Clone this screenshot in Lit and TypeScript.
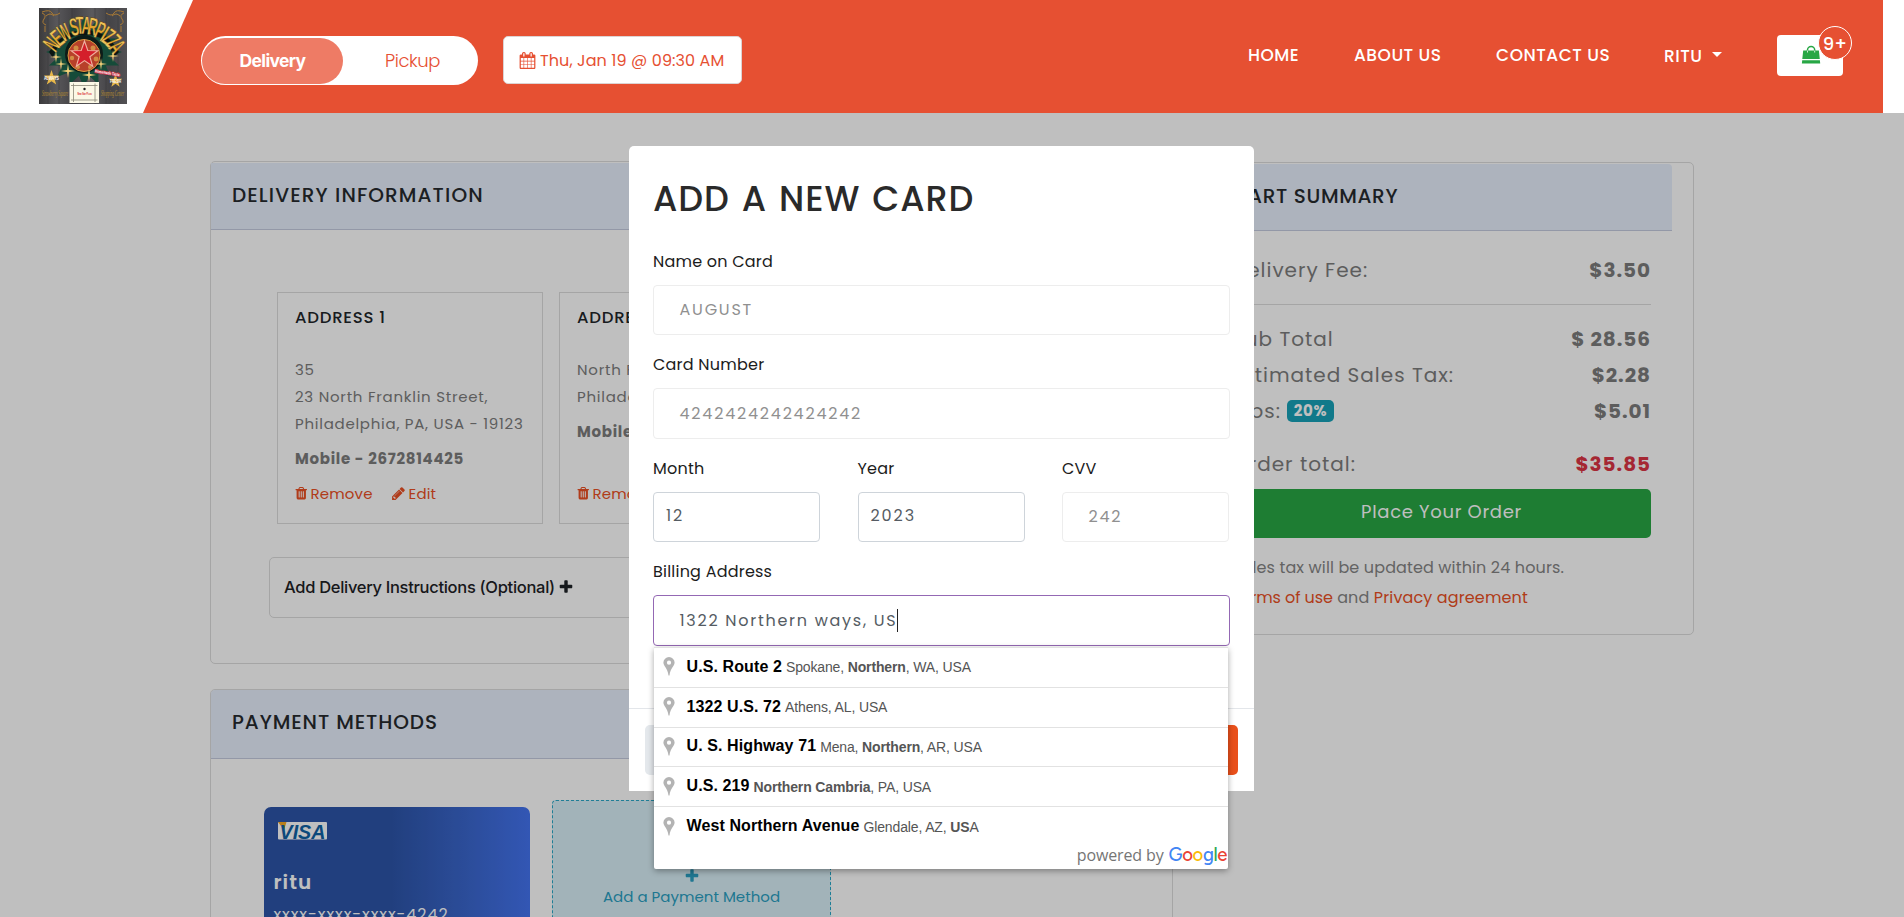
import { LitElement, html, css, svg } from "lit";
import { customElement } from "lit/decorators.js";

const ICONS: Record<string, string> = {
  calendar:
    "M192 1664h288v-288h-288v288zm352 0h320v-288h-320v288zm-352-352h288v-320h-288v320zm352 0h320v-320h-320v320zm-352-384h288v-288h-288v288zm736 736h320v-288h-320v288zm-384-736h320v-288h-320v288zm768 736h288v-288h-288v288zm-384-352h320v-320h-320v320zm-352-864v-288q0-13-9.5-22.5t-22.5-9.5h-64q-13 0-22.5 9.5t-9.5 22.5v288q0 13 9.5 22.5t22.5 9.5h64q13 0 22.5-9.5t9.5-22.5zm736 864h288v-320h-288v320zm-384-384h320v-288h-320v288zm384 0h288v-288h-288v288zm32-480v-288q0-13-9.5-22.5t-22.5-9.5h-64q-13 0-22.5 9.5t-9.5 22.5v288q0 13 9.5 22.5t22.5 9.5h64q13 0 22.5-9.5t9.5-22.5zm384-64v1280q0 52-38 90t-90 38h-1408q-52 0-90-38t-38-90v-1280q0-52 38-90t90-38h128v-96q0-66 47-113t113-47h64q66 0 113 47t47 113v96h384v-96q0-66 47-113t113-47h64q66 0 113 47t47 113v96h128q52 0 90 38t38 90z",
  trash:
    "M704 1376v-704q0-14-9-23t-23-9h-64q-14 0-23 9t-9 23v704q0 14 9 23t23 9h64q14 0 23-9t9-23zm256 0v-704q0-14-9-23t-23-9h-64q-14 0-23 9t-9 23v704q0 14 9 23t23 9h64q14 0 23-9t9-23zm256 0v-704q0-14-9-23t-23-9h-64q-14 0-23 9t-9 23v704q0 14 9 23t23 9h64q14 0 23-9t9-23zm-544-992h448l-48-117q-7-9-17-11h-317q-10 2-17 11zm928 32v64q0 14-9 23t-23 9h-96v948q0 83-47 143.5t-113 60.5h-832q-66 0-113-58.5t-47-141.5v-952h-96q-14 0-23-9t-9-23v-64q0-14 9-23t23-9h309l70-167q15-37 54-63t79-26h320q40 0 79 26t54 63l70 167h309q14 0 23 9t9 23z",
  pencil:
    "M491 1536l91-91-235-235-91 91v107h128v128h107zm523-928q0-22-22-22-10 0-17 7l-542 542q-7 7-7 17 0 22 22 22 10 0 17-7l542-542q7-7 7-17zm-54-192l416 416-832 832h-416v-416l832-832zm683 96q0 53-37 90l-166 166-416-416 166-165q36-38 90-38 53 0 91 38l235 234q37 39 37 91z",
  plus:
    "M1600 736v192q0 40-28 68t-68 28h-416v416q0 40-28 68t-68 28h-192q-40 0-68-28t-28-68v-416h-416q-40 0-68-28t-28-68v-192q0-40 28-68t68-28h416v-416q0-40 28-68t68-28h192q40 0 68 28t28 68v416h416q40 0 68 28t28 68z",
};

const icon = (name: string) => html`<svg class="ico ${name}" viewBox="0 0 1792 1792"><path d=${ICONS[name]} fill="currentColor"></path></svg>`;

const shared = css`
  :host { display: block; box-sizing: border-box; }
  *, *::before, *::after { box-sizing: border-box; }
  .ico { display: block; flex: none; }
`;

const STAR = "0,-1 .235,-.324 .951,-.309 .38,.124 .588,.809 0,.4 -.588,.809 -.38,.124 -.951,-.309 -.235,-.324";
const star = (x: number, y: number, r: number, fill: string, line = "none") =>
  svg`<polygon points=${STAR} transform="translate(${x} ${y}) scale(${r})" fill=${fill} stroke=${line} stroke-width=".08"></polygon>`;
const spark = (x: number, y: number, r: number) =>
  svg`<path transform="translate(${x} ${y}) scale(${r})" d="M0-1 .13-.13 1 0 .13.13 0 1-.13.13-1 0-.13-.13Z" fill="#f6d37a"></path>`;

/* Letters of the arched name, each with its centre and a horizontal squeeze. */
const ARCH: [string, number, number, number][] = [
  ["N", 12, 36, 0.52], ["E", 18, 29.5, 0.52], ["W", 25, 24, 0.44],
  ["S", 35, 18.5, 0.52], ["T", 41, 17, 0.52], ["A", 47.5, 17, 0.52], ["R", 54, 18, 0.52],
  ["P", 61.5, 22, 0.52], ["I", 66, 25.5, 0.6], ["Z", 70, 28.5, 0.52], ["Z", 75, 33, 0.52], ["A", 78.5, 38.5, 0.52],
];

@customElement("pizza-logo")
class PizzaLogo extends LitElement {
  static styles = [shared, css`
    svg { display: block; width: 88px; height: 96px; }
    .arc { font: 700 25px "Liberation Sans", sans-serif; text-anchor: middle; }
    .script { font: italic 8px "Liberation Serif", serif; fill: #b98d2f; }
    .tag { font: 700 4.5px "Liberation Sans", sans-serif; fill: #fff; }
    .promo { font: 700 4px "Liberation Sans", sans-serif; fill: #fff; }
    .map { font: 700 3.4px "Liberation Sans", sans-serif; fill: #d8232a; }
  `];
  render() {
    const ray = Array.from({ length: 32 }, (_, i) => {
      const a = (i * Math.PI) / 16, r = i % 2 ? 26 : 38;
      return `${(45 + r * Math.sin(a)).toFixed(1)},${(44 - r * Math.cos(a) * 0.93).toFixed(1)}`;
    }).join(" ");
    return html`<svg viewBox="0 0 88 96">
      <defs>
        <linearGradient id="gold" x1="0" y1="0" x2="0" y2="1">
          <stop offset="0" stop-color="#f9dc7c"></stop><stop offset=".55" stop-color="#e0a22a"></stop><stop offset="1" stop-color="#fbe58f"></stop>
        </linearGradient>
        <linearGradient id="wood" x1="0" x2="1">
          <stop offset="0" stop-color="#3b3a3c"></stop><stop offset=".2" stop-color="#58575a"></stop><stop offset=".4" stop-color="#434245"></stop>
          <stop offset=".6" stop-color="#5b5a5d"></stop><stop offset=".8" stop-color="#454447"></stop><stop offset="1" stop-color="#525154"></stop>
        </linearGradient>
      </defs>
      <rect width="88" height="96" fill="url(#wood)"></rect>
      <g stroke="#333235" stroke-width=".6" opacity=".7"><path d="M9 0v96M20 0v96M33 0v96M56 0v96M67 0v96M79 0v96"></path></g>
      <g fill="none" stroke="#a97a35" stroke-width="1">
        <path d="M3 4q8-3 10 1t8 0M3 5q5 2 2 6t2 6M7 8q4-4 8 0M85 4q-8-3-10 1t-8 0M85 5q-5 2-2 6t-2 6M81 8q-4-4-8 0M6 18v6M82 18v6"></path>
      </g>
      <polygon points=${ray} fill="#154b39"></polygon>
      <path d="M14 50Q20 27 46 27T74 50L80 44Q68 22 46 22T10 44Z" fill="#0a1512"></path>
      <circle cx="45" cy="46" r="19" fill="#0d1c18"></circle>
      <circle cx="45" cy="47.500" r="16" fill="#b8402a" stroke="#d79a40" stroke-width="1"></circle>
      <g fill="#d9a04c" opacity=".8">
        <circle cx="37" cy="40" r="2.500"></circle><circle cx="54" cy="40" r="2.500"></circle><circle cx="33" cy="50" r="2.200"></circle>
        <circle cx="57" cy="51" r="2.400"></circle><circle cx="39" cy="59" r="2"></circle><circle cx="51" cy="59" r="2"></circle>
      </g>
      ${star(45.5, 47, 14, "#d41f2b", "#f0b0a0")}
      ${ARCH.map(([c, x, y, k]) => svg`<text class="arc" fill="url(#gold)" stroke="#3b2708" stroke-width=".4" y="9" transform="translate(${x} ${y}) rotate(${(Math.atan2(x - 45, 62 - y) * 180) / Math.PI}) scale(${k} 1)">${c}</text>`)}
      ${spark(17, 49, 6)}${spark(22, 56, 6)}${spark(29, 63, 7)}${spark(50, 67, 7)}${spark(62, 56, 6)}${spark(74, 48, 6)}
      ${star(12.5, 70, 8, "#e8b84a")}${star(76.500, 73, 7, "#e8b84a")}
      <text class="tag" x="5" y="72" textLength="15" lengthAdjust="spacingAndGlyphs">ALWAYS</text>
      <text class="tag" x="71" y="75" textLength="11" lengthAdjust="spacingAndGlyphs">FRESH</text>
      <g transform="rotate(9 70 64)"><text class="promo" x="56" y="66.500" textLength="25" lengthAdjust="spacingAndGlyphs" stroke="#c93346" stroke-width="1.600" paint-order="stroke">Homemade Taste</text></g>
      <text class="script" x="3" y="88" textLength="26" lengthAdjust="spacingAndGlyphs">Strawberry Square</text>
      <text class="script" x="62" y="88" textLength="23" lengthAdjust="spacingAndGlyphs">Shopping Center</text>
      <rect x="30.500" y="74" width="29.500" height="21" fill="#fbf8e6"></rect>
      <path d="M32 77.500h26.500M32 92h26.500M34.500 75.500v18.500M56 75.500v18.500" stroke="#8a8676" stroke-width=".8" fill="none"></path>
      <circle cx="45.500" cy="81" r="1.200" fill="#222"></circle>
      <text class="map" x="38.500" y="87" textLength="14" lengthAdjust="spacingAndGlyphs">New Star Pizza</text>
    </svg>`;
  }
}

@customElement("top-bar")
class TopBar extends LitElement {
  static styles = [shared, css`
    :host { height: 113px; background: #fff; display: flex; }
    .brand { width: 143px; flex: none; padding: 8px 0 0 39px; }
    .bar { margin-right: 21px; flex: 1; height: 113px; display: flex; align-items: flex-start; background: #e65032; padding: 0 40px 0 58px;
      clip-path: polygon(50px 0, 100% 0, 100% 100%, 0 100%); }
    .toggle { margin-top: 36px; width: 277px; height: 49px; border-radius: 25px; background: #fff; display: flex; padding: 2px 1px 1px; line-height: 46px; font-size: 18px; }
    .on { width: 141px; border-radius: 24px; background: #ee7b65; color: #fff; font-family: "Inter", sans-serif; font-weight: 700; text-align: center; font-size: 17.5px; letter-spacing: -.65px; }
    .off { flex: 1; color: #e65032; text-align: center; font-weight: 300; letter-spacing: -.45px; padding-left: 5px; }
    .when { margin: 36px 0 0 25px; width: 239px; height: 48px; border-radius: 5px; border: 1px solid #dcd3d3; background: #fff; color: #e65032;
      font-size: 16px; letter-spacing: .1px; display: flex; align-items: center; padding-left: 15px; gap: 4px; }
    .calendar { width: 17px; height: 17px; }
    .links { margin: 35px 0 0 auto; display: grid; grid-template-columns: 106px 142px 168px 113px 66px; line-height: 40px; color: #fff; font-weight: 500; font-size: 17px; letter-spacing: .5px; }
    .user { display: flex; align-items: center; gap: 9.500px; }
    .caret { border: 5.5px solid transparent; border-top-color: #fff; border-bottom: 0; margin-top: -3px; }
    .cart { width: 66px; height: 41px; background: #fff; border-radius: 4px; position: relative; padding: 9px 0 0 23.500px; }
    .bag { display: block; width: 20px; height: 20px; }
    .count { position: absolute; left: 41px; top: -9px; width: 34px; height: 34px; border-radius: 50%; background: #e65032; border: 1px solid #fff; line-height: 33px; text-align: center; font-size: 18px; letter-spacing: 0; }
  `];
  render() {
    return html`
      <div class="brand"><pizza-logo></pizza-logo></div>
      <div class="bar">
        <div class="toggle"><div class="on">Delivery</div><div class="off">Pickup</div></div>
        <div class="when">${icon("calendar")}<span>Thu, Jan 19 @ 09:30 AM</span></div>
        <nav class="links">
          <span>HOME</span><span>ABOUT US</span><span>CONTACT US</span>
          <span class="user">RITU <i class="caret"></i></span>
          <div class="cart">
            <svg class="bag" viewBox="0 0 20 20"><path d="M6.500 9V6a3.600 3.600 0 0 1 7.200 0v3" fill="none" stroke="#28a745" stroke-width="1.500"></path><path d="M2.200 6.500h15.700L18.800 15H1.300ZM1.200 16.200h17.700L19.200 19.500H.9Z" fill="#28a745"></path><path d="M6.500 6.500v2M13.700 6.500v2" stroke="#fff" stroke-width=".8"></path></svg>
            <span class="count">9+</span>
          </div>
        </nav>
      </div>`;
  }
}

@customElement("checkout-page")
class CheckoutPage extends LitElement {
  static styles = [shared, css`
    :host { height: 804px; overflow: hidden; background: #fff; display: grid; grid-template-columns: 963px 483px; gap: 38px; padding: 48px 0 0 210px; align-items: start; color: #7c7c7c; }
    .panel { border: 1px solid #dcdcdc; border-radius: 5px; }
    .head { background: #e7effc; border-bottom: 1px solid #c5cbdf; color: #262a2e; font-weight: 500; font-size: 20px; padding-left: 21px; }
    .info { height: 503px; }
    .info .head { margin-top: 1px; height: 67px; line-height: 64px; letter-spacing: 1.1px; }
    .pay { margin-top: 25px; height: 400px; }
    .pay .head { height: 69px; line-height: 64px; letter-spacing: .9px; border-radius: 4px 4px 0 0; }
    .cards { display: flex; gap: 16px; padding: 62px 0 0 66px; }
    .addr { width: 266px; height: 232px; border: 1px solid #dcdcdc; padding: 12px 0 16px 17px; display: flex; flex-direction: column; font-size: 15px; line-height: 27px; white-space: nowrap; letter-spacing: .74px; }
    .addr h3 { margin: 0 0 25px; font-weight: 500; font-size: 16.5px; line-height: 26px; color: #22262a; letter-spacing: .75px; }
    .mobile { font-weight: 700; margin-top: 8px; letter-spacing: .72px; }
    .acts { margin-top: auto; display: flex; align-items: center; color: #eb5024; letter-spacing: .15px; }
    .acts .trash { width: 14.5px; height: 14.5px; margin: 0 2px 0 -1px; }
    .acts .pencil { width: 15px; height: 15px; margin: 0 3px 0 18px; }
    .extra { margin: 33px 0 0 58px; width: 780px; height: 61px; border: 1px solid #dcdcdc; border-radius: 5px; padding: 0 0 1px 14px; display: flex; align-items: center; gap: 3px; color: #1e2226; font-family: "Inter", sans-serif; font-weight: 500; font-size: 16.5px; letter-spacing: -.3px; }
    .extra .plus { width: 16px; height: 16px; }
    .methods { display: flex; gap: 22px; padding: 41px 0 0 53px; }
    .visa { margin-top: 7px; width: 266px; height: 170px; border-radius: 7px; background: linear-gradient(90deg, #2d55a9 0, #2d55a9 48%, #3a66cc 75%, #4474f1 100%); color: #fff; padding: 15px 9.5px; letter-spacing: .96px; font-size: 16px; line-height: 24px; }
    .mark { display: block; width: 50px; height: 18px; margin: 0 0 30px 4px; }
    .mark text { font: italic 700 21px "Liberation Sans", sans-serif; fill: #0f62a5; letter-spacing: 0; }
    .owner { font-weight: 600; font-size: 20px; letter-spacing: 1.03px; margin-bottom: 9px; }
    .add { width: 279px; height: 190px; border: 1px dashed #2aa9c8; border-radius: 4px; background: #d9eff7; color: #2a9fc2; display: flex; flex-direction: column; align-items: center; padding-top: 67px; font-size: 15px; letter-spacing: .03px; line-height: 24px; }
    .add .plus { width: 16px; height: 16px; margin-bottom: 1px; }
    .cart { margin-top: 1px; height: 473px; font-size: 20px; letter-spacing: 1px; padding-right: 42px; }
    .cart .head { margin: 1px -21px 0 0; height: 67px; line-height: 64px; letter-spacing: .65px; border-radius: 0 4px 0 0; padding-left: 20px; }
    .body { padding: 21px 0 0 20px; }
    .row { display: flex; justify-content: space-between; align-items: center; height: 36px; }
    .row b { letter-spacing: .95px; }
    .rule { border-top: 1px solid #dcdcdc; margin: 16px 0 16px; }
    .pct { background: #17a2b8; color: #fff; border-radius: 5px; font-size: 15px; font-weight: 700; letter-spacing: .6px; width: 47px; height: 22px; line-height: 22px; margin-left: 6px; text-align: center; }
    .tips { display: flex; align-items: center; }
    .total { margin-top: 16.500px; }
    .total b { color: #dc3545; }
    .order { margin-top: 7.500px; height: 49px; border-radius: 5px; background: #28a745; color: #fff; text-align: center; font-weight: 400; font-size: 18px; line-height: 46px; letter-spacing: .68px; }
    .note { margin-top: 15px; font-size: 16px; line-height: 30px; letter-spacing: .13px; color: #858585; white-space: nowrap; }
    .note a { color: #eb5024; }
    .note .terms { letter-spacing: -.1px; }
  `];
  address(title: string, lines: string[], mobile: string) {
    return html`<div class="addr"><h3>${title}</h3>${lines.map((l) => html`<div>${l}</div>`)}
      <div class="mobile">Mobile - ${mobile}</div>
      <div class="acts">${icon("trash")}<span>Remove</span>${icon("pencil")}<span>Edit</span></div></div>`;
  }
  render() {
    return html`
      <div>
        <section class="panel info">
          <div class="head">DELIVERY INFORMATION</div>
          <div class="cards">
            ${this.address("ADDRESS 1", ["35", "23 North Franklin Street,", "Philadelphia, PA, USA - 19123"], "2672814425")}
            ${this.address("ADDRESS 2", ["North Franklin Street,", "Philadelphia, PA, USA - 19123"], "2672814425")}
          </div>
          <div class="extra"><span>Add Delivery Instructions (Optional)</span>${icon("plus")}</div>
        </section>
        <section class="panel pay">
          <div class="head">PAYMENT METHODS</div>
          <div class="methods">
            <div class="visa">
              <svg class="mark" viewBox="0 0 50 18"><rect width="49" height="17.500" rx="1" fill="#fff"></rect><path d="M0 0h8.500L6 8Z" fill="#f7a823"></path><text x="1.500" y="16.500" textLength="46" lengthAdjust="spacingAndGlyphs">VISA</text></svg>
              <div class="owner">ritu</div>
              <div>xxxx-xxxx-xxxx-4242</div>
            </div>
            <div class="add">${icon("plus")}<span>Add a Payment Method</span></div>
          </div>
        </section>
      </div>
      <section class="panel cart">
        <div class="head">CART SUMMARY</div>
        <div class="body">
          <div class="row"><span>Delivery Fee:</span><b>$3.50</b></div>
          <div class="rule"></div>
          <div class="row"><span>Sub Total</span><b>$ 28.56</b></div>
          <div class="row"><span>Estimated Sales Tax:</span><b>$2.28</b></div>
          <div class="row"><span class="tips">Tips: <span class="pct">20%</span></span><b>$5.01</b></div>
          <div class="row total"><span>Order total:</span><b>$35.85</b></div>
          <div class="order">Place Your Order</div>
          <div class="note">Sales tax will be updated within 24 hours.<br><a class="terms">Terms of use</a> and <a>Privacy agreement</a></div>
        </div>
      </section>`;
  }
}

type Part = string | [string];
const PLACES: { main: string; sub: Part[] }[] = [
  { main: "U.S. Route 2", sub: ["Spokane, ", ["Northern"], ", WA, USA"] },
  { main: "1322 U.S. 72", sub: ["Athens, AL, USA"] },
  { main: "U. S. Highway 71", sub: ["Mena, ", ["Northern"], ", AR, USA"] },
  { main: "U.S. 219", sub: [["Northern Cambria"], ", PA, USA"] },
  { main: "West Northern Avenue", sub: ["Glendale, AZ, ", ["US"], "A"] },
];

@customElement("place-list")
class PlaceList extends LitElement {
  static styles = [shared, css`
    :host { width: 574px; height: 222px; background: #fff; border-radius: 2px; box-shadow: 0 2px 6px rgba(0,0,0,.35); font-family: "Liberation Sans", Arial, sans-serif; color: #555; }
    .row { height: 39.8px; border-top: 1px solid #e2e2e2; display: flex; align-items: center; font-size: 14px; letter-spacing: -.14px; padding: 0 0 1px 8.500px; }
    .pin { width: 12px; height: 19px; margin-right: 12px; display: block; }
    .row > b { font-size: 16px; color: #000; letter-spacing: .1px; margin-right: 4px; }
    .row > span { padding-top: 1px; white-space: pre; }
    .by { display: flex; justify-content: flex-end; align-items: baseline; line-height: 22px; font-family: "Open Sans", sans-serif; font-size: 16px; letter-spacing: -.12px; color: #757575; padding-right: 1px; margin-top: -2px; gap: 5px; }
    .g { font: 500 18.500px/22px "Figtree", "Lato", sans-serif; letter-spacing: -.4px; }
    .b { color: #4285f4; } .r { color: #ea4335; } .y { color: #fbbc05; } .n { color: #34a853; }
  `];
  render() {
    return html`${PLACES.map((p) => html`<div class="row">
        <svg class="pin" viewBox="0 0 12 19"><path d="M6 0a5.600 5.600 0 0 1 5.600 5.600C11.600 9.500 7.400 11 6.500 18.500h-1C4.600 11 .4 9.500.4 5.600A5.600 5.600 0 0 1 6 0Zm0 3.600a2.100 2.100 0 1 0 0 4.200 2.100 2.100 0 0 0 0-4.200Z" fill="#b3b3b3"></path></svg>
        <b>${p.main}</b><span>${p.sub.map((s) => (typeof s === "string" ? s : html`<b>${s[0]}</b>`))}</span></div>`)}
      <div class="by"><span>powered by</span><span class="g"><span class="b">G</span><span class="r">o</span><span class="y">o</span><span class="b">g</span><span class="n">l</span><span class="r">e</span></span></div>`;
  }
}

@customElement("card-dialog")
class CardDialog extends LitElement {
  static styles = [shared, css`
    :host { width: 625px; height: 645px; background: #fff; border-radius: 5px 5px 0 0; padding-top: 31px; color: #1c1c1c; font-size: 16px; display: flex; flex-direction: column; }
    h2 { margin: 0 0 28.500px 24px; font-weight: 500; font-size: 35px; line-height: 44.500px; letter-spacing: .9px; word-spacing: 2px; color: #2a2a2a; }
    .form { padding: 0 24px; display: flex; flex-direction: column; gap: 18.200px; }
    .field { display: flex; flex-direction: column; gap: 11px; }
    .label { line-height: 24px; letter-spacing: .22px; }
    .box { height: 50.300px; border: 1px solid #ededed; border-radius: 4px; padding: 0 0 1px 25.500px; color: #909090; letter-spacing: 1.78px; display: flex; align-items: center; }
    .pick { border-color: #ced4da; color: #555c63; padding: 0 0 3px 12px; letter-spacing: 1.9px; }
    .three { display: grid; grid-template-columns: 167px 167px 167px; gap: 37.500px; }
    .focus { border-color: #9468b4; color: #555c63; letter-spacing: 1.72px; width: 577px; }
    .cursor { width: 1px; height: 23px; background: #222; }
    .foot { margin-top: auto; border-top: 1px solid #e3e6ea; height: 83px; padding: 16px; display: flex; justify-content: space-between; }
    .btn { width: 290px; height: 50px; border-radius: 5px; background: #e4e8ec; }
    .save { background: #e9501b; }
    place-list { position: absolute; left: 25px; top: 501px; }
  `];
  render() {
    return html`
      <h2>ADD A NEW CARD</h2>
      <div class="form">
        <div class="field"><span class="label">Name on Card</span><div class="box">AUGUST</div></div>
        <div class="field"><span class="label">Card Number</span><div class="box">4242424242424242</div></div>
        <div class="three">
          <div class="field"><span class="label">Month</span><div class="box pick">12</div></div>
          <div class="field"><span class="label">Year</span><div class="box pick">2023</div></div>
          <div class="field"><span class="label">CVV</span><div class="box">242</div></div>
        </div>
        <div class="field"><span class="label">Billing Address</span><div class="box focus">1322 Northern ways, US<i class="cursor"></i></div></div>
      </div>
      <div class="foot"><span class="btn"></span><span class="btn save"></span></div>
      <place-list></place-list>`;
  }
}

@customElement("app-root")
class AppRoot extends LitElement {
  static styles = [shared, css`
    :host { position: relative; width: 1904px; height: 917px; overflow: hidden; font-family: "Poppins", "Inter", sans-serif; }
    .backdrop { position: absolute; inset: 113px 0 0 0; background: rgba(0, 0, 0, .25); }
    card-dialog { position: absolute; left: 629px; top: 146px; }
  `];
  render() {
    return html`<top-bar></top-bar><checkout-page></checkout-page><div class="backdrop"></div><card-dialog></card-dialog>`;
  }
}
